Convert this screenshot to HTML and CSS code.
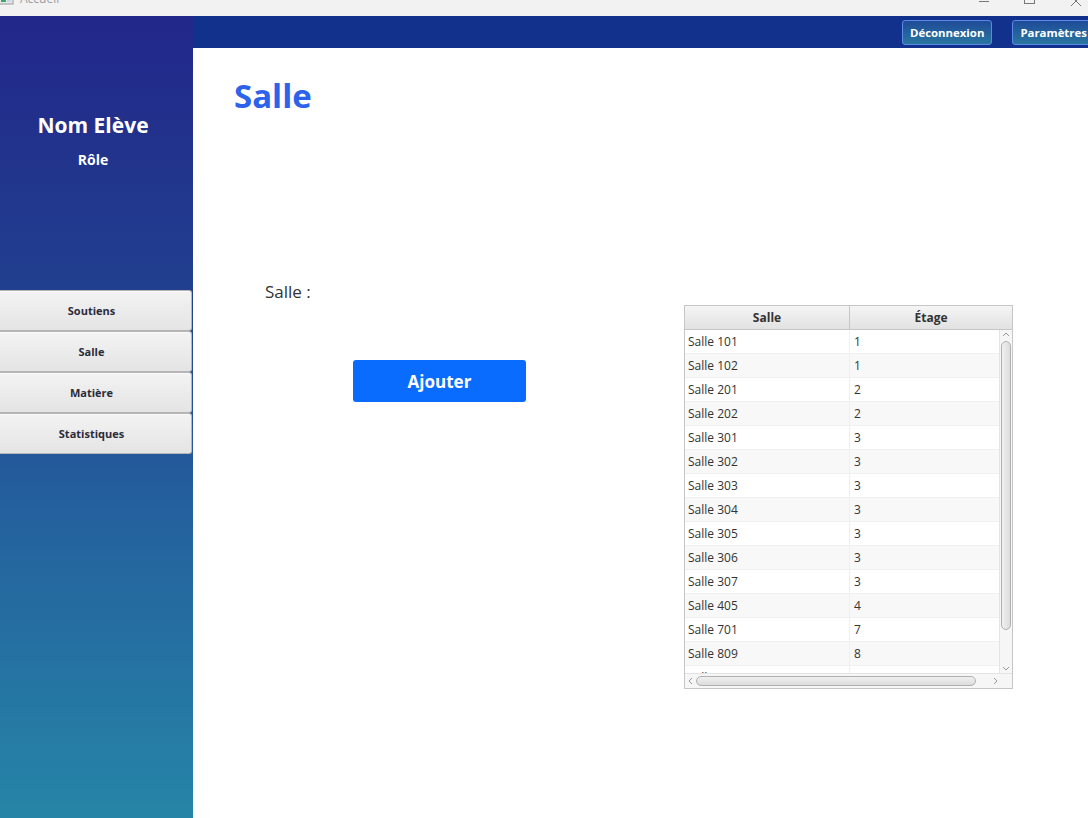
FILE: index.html
```html
<!DOCTYPE html>
<html lang="fr">
<head>
<meta charset="utf-8">
<title>Accueil</title>
<link rel="stylesheet" href="styles.css">
</head>
<body>
<div class="window">
  <div class="titlebar">
    <div class="app">
      <svg class="app-icon" width="16" height="16" viewBox="0 0 16 16"><rect x="1" y="1" width="14" height="12" fill="#e8e8e8" stroke="#9a9a9a"/><rect x="3" y="3" width="5" height="8" fill="#3fa372"/><rect x="9" y="3" width="4" height="8" fill="#c9d6e6"/></svg>
      <span class="app-title">Accueil</span>
    </div>
    <div class="controls">
      <svg width="46" height="16" viewBox="0 0 46 16"><line x1="18" y1="1.5" x2="28" y2="1.5" stroke="#777" stroke-width="1"/></svg>
      <svg width="46" height="16" viewBox="0 0 46 16"><rect x="17.5" y="-6.5" width="10" height="10" fill="none" stroke="#777" stroke-width="1"/></svg>
      <svg width="46" height="16" viewBox="0 0 46 16"><path d="M18 -4 L28 6 M28 -4 L18 6" stroke="#777" stroke-width="1" fill="none"/></svg>
    </div>
  </div>
  <div class="app-body">
    <aside class="sidebar">
      <div class="profile">
        <div class="name">Nom Elève</div>
        <div class="role">Rôle</div>
      </div>
      <nav class="nav">
        <button class="nav-btn">Soutiens</button>
        <button class="nav-btn">Salle</button>
        <button class="nav-btn">Matière</button>
        <button class="nav-btn">Statistiques</button>
      </nav>
    </aside>
    <main class="main">
      <div class="topbar">
        <button class="top-btn">Déconnexion</button>
        <button class="top-btn">Paramètres</button>
      </div>
      <div class="content">
        <h1 class="page-title">Salle</h1>
        <div class="work">
          <div class="form">
            <div class="field-label">Salle :</div>
            <button class="add-btn">Ajouter</button>
          </div>
          <div class="table">
            <div class="thead">
              <div class="th c1">Salle</div>
              <div class="th c2">Étage</div>
            </div>
            <div class="tbody-wrap">
              <div class="tbody">
                <div class="tr"><div class="td c1">Salle 101</div><div class="td c2">1</div></div>
                <div class="tr"><div class="td c1">Salle 102</div><div class="td c2">1</div></div>
                <div class="tr"><div class="td c1">Salle 201</div><div class="td c2">2</div></div>
                <div class="tr"><div class="td c1">Salle 202</div><div class="td c2">2</div></div>
                <div class="tr"><div class="td c1">Salle 301</div><div class="td c2">3</div></div>
                <div class="tr"><div class="td c1">Salle 302</div><div class="td c2">3</div></div>
                <div class="tr"><div class="td c1">Salle 303</div><div class="td c2">3</div></div>
                <div class="tr"><div class="td c1">Salle 304</div><div class="td c2">3</div></div>
                <div class="tr"><div class="td c1">Salle 305</div><div class="td c2">3</div></div>
                <div class="tr"><div class="td c1">Salle 306</div><div class="td c2">3</div></div>
                <div class="tr"><div class="td c1">Salle 307</div><div class="td c2">3</div></div>
                <div class="tr"><div class="td c1">Salle 405</div><div class="td c2">4</div></div>
                <div class="tr"><div class="td c1">Salle 701</div><div class="td c2">7</div></div>
                <div class="tr"><div class="td c1">Salle 809</div><div class="td c2">8</div></div>
                <div class="tr"><div class="td c1">Salle 909</div><div class="td c2">9</div></div>
              </div>
              <div class="vscroll">
                <svg class="arrow" width="12" height="10" viewBox="0 0 12 10"><path d="M3 6 L6 3 L9 6" stroke="#999" fill="none"/></svg>
                <div class="vthumb"></div>
                <svg class="arrow down" width="12" height="10" viewBox="0 0 12 10"><path d="M3 4 L6 7 L9 4" stroke="#999" fill="none"/></svg>
              </div>
            </div>
            <div class="hscroll">
              <svg class="harrow" width="10" height="14" viewBox="0 0 10 14"><path d="M6 4 L3 7 L6 10" stroke="#999" fill="none"/></svg>
              <div class="hthumb"></div>
              <svg class="harrow" width="10" height="14" viewBox="0 0 10 14"><path d="M4 4 L7 7 L4 10" stroke="#999" fill="none"/></svg>
              <div class="corner"></div>
            </div>
          </div>
        </div>
      </div>
    </main>
  </div>
</div>
</body>
</html>
```

FILE: styles.css
```css
* { box-sizing: border-box; }
html, body { margin: 0; padding: 0; }
body {
  width: 1088px;
  height: 818px;
  overflow: hidden;
  font-family: "Open Sans", "Noto Sans", sans-serif;
  background: #fff;
}
.window { display: flex; flex-direction: column; width: 1088px; height: 818px; }

.titlebar {
  height: 16px;
  flex: none;
  background: #f2f2f2;
  display: flex;
  justify-content: space-between;
  overflow: hidden;
}
.app { display: flex; align-items: flex-start; margin-top: -9px; }
.app-icon { margin-left: -2px; }
.app-title { margin-left: 6px; font-size: 12px; color: #9b9b9b; line-height: 16px; }
.controls { display: flex; margin-right: -11px; }

.app-body { flex: 1; display: flex; min-height: 0; }

.sidebar {
  width: 193px;
  flex: none;
  background: linear-gradient(180deg, #22278a 0%, #21408f 35%, #245f9d 60%, #2685a7 100%);
  display: flex;
  flex-direction: column;
}
.profile { padding-top: 95px; padding-right: 7px; text-align: center; color: #fff; }
.name { font-size: 21px; font-weight: 700; line-height: 28px; }
.role { font-size: 14px; font-weight: 700; line-height: 20px; margin-top: 11px; }
.nav { margin-top: 120px; display: flex; flex-direction: column; }
.nav-btn {
  width: 192px;
  height: 41px;
  margin: 0;
  border: 1px solid #b5b5b5;
  border-left: none;
  border-radius: 0 3px 3px 0;
  background: linear-gradient(180deg, #f3f3f3 0%, #e4e4e4 100%);
  font-family: inherit;
  font-size: 11px;
  font-weight: 700;
  color: #2b2b3a;
  padding: 0 8px 0 0;
  box-shadow: inset 0 1px 0 #fafafa;
}

.main { flex: 1; display: flex; flex-direction: column; min-width: 0; }
.topbar {
  height: 32px;
  flex: none;
  background: #11318c;
  display: flex;
  align-items: center;
  gap: 20px;
  padding-left: 709px;
  overflow: hidden;
}
.top-btn {
  flex: none;
  height: 25px;
  padding: 0 7px;
  border: 1px solid #5a8ae6;
  border-radius: 3px;
  background: linear-gradient(180deg, #1f4b98 0%, #2a76a0 100%);
  color: #fff;
  font-family: inherit;
  font-size: 11.4px;
  font-weight: 700;
  white-space: nowrap;
}

.content { flex: 1; background: #fff; padding-top: 22px; }
.page-title {
  margin: 0 0 0 41px;
  font-size: 33px;
  font-weight: 700;
  line-height: 52px;
  color: #2d62ea;
}
.work { display: flex; margin-top: 158px; }
.form { width: 491px; flex: none; }
.field-label {
  margin-left: 72px;
  font-size: 17px;
  line-height: 24px;
  color: #333;
}
.add-btn {
  display: block;
  margin: 56px 0 0 160px;
  width: 173px;
  height: 42px;
  border: none;
  border-radius: 3px;
  background: #0a6cff;
  color: #fff;
  font-family: inherit;
  font-size: 17px;
  font-weight: 700;
}

.table {
  margin-top: 25px;
  width: 329px;
  height: 384px;
  border: 1px solid #c6c6c6;
  display: flex;
  flex-direction: column;
  background: #fff;
}
.thead {
  display: flex;
  height: 24px;
  flex: none;
  background: linear-gradient(180deg, #f5f5f5 0%, #e2e2e2 100%);
  border-bottom: 1px solid #c6c6c6;
}
.th {
  font-size: 12px;
  font-weight: 700;
  color: #333;
  line-height: 23px;
  text-align: center;
}
.th.c1 { width: 165px; border-right: 1px solid #c6c6c6; }
.th.c2 { flex: 1; }
.tbody-wrap { flex: 1; display: flex; min-height: 0; }
.tbody { flex: 1; overflow: hidden; }
.tr { display: flex; height: 24px; border-bottom: 1px solid #f0f0f0; }
.tr:nth-child(even) { background: #f8f8f8; }
.td { font-size: 12px; color: #333; line-height: 23px; padding-left: 3px; }
.td.c1 { width: 165px; border-right: 1px solid #f0f0f0; }
.td.c2 { flex: 1; padding-left: 4px; }
.vscroll {
  width: 13px;
  flex: none;
  background: #f6f6f6;
  border-left: 1px solid #e4e4e4;
  display: flex;
  flex-direction: column;
  align-items: center;
}
.arrow { flex: none; }
.vthumb {
  width: 10px;
  height: 289px;
  margin-top: 1px;
  border: 1px solid #b0b0b0;
  border-radius: 5px;
  background: linear-gradient(90deg, #f0f0f0, #dcdcdc);
}
.arrow.down { margin-top: auto; }
.hscroll {
  height: 15px;
  flex: none;
  display: flex;
  align-items: center;
  background: #f6f6f6;
  border-top: 1px solid #e4e4e4;
}
.harrow { flex: none; margin-left: 1px; }
.hthumb {
  width: 280px;
  height: 10px;
  border: 1px solid #b0b0b0;
  border-radius: 5px;
  background: linear-gradient(180deg, #f0f0f0, #dcdcdc);
}
.hthumb + .harrow { margin-left: 14px; }
.corner { flex: 1; }
```
